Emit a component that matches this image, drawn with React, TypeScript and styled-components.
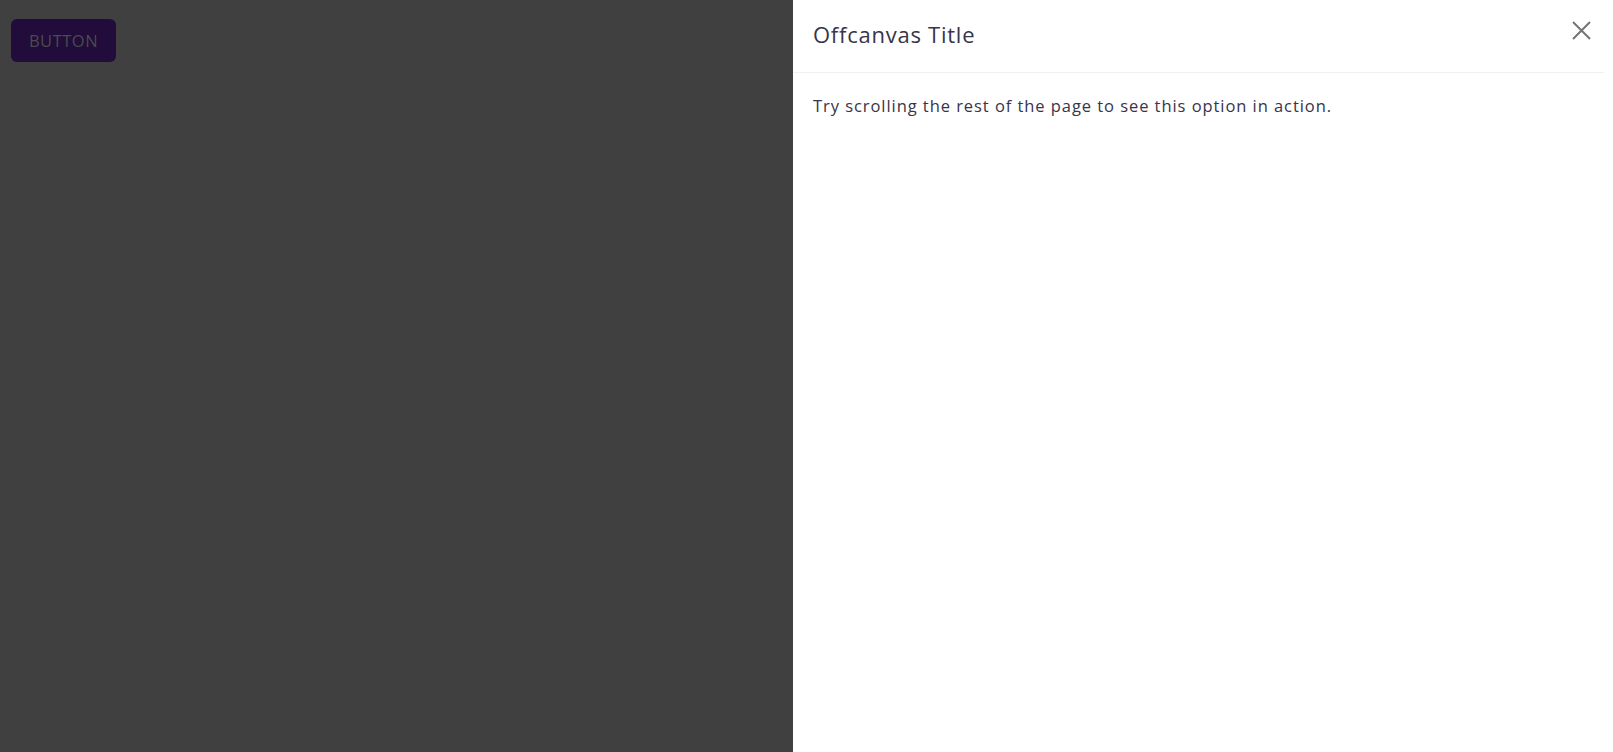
import styled, { createGlobalStyle } from "styled-components";

const GlobalStyle = createGlobalStyle`
html, body {
    margin: 0;
    padding: 0;
    height: 100%;
}
body {
    font-family: "Open Sans", "Noto Sans", sans-serif;
    background: #404040;
    overflow: hidden;
}
`

const StyledPage = styled.div`
min-height: 100vh;
padding: 19px 11px;
box-sizing: border-box;
`

const StyledButton = styled.button`
width: 105px;
height: 43px;
border: none;
border-radius: 6px;
background: #210c3b;
color: #4b4b4b;
font-family: inherit;
font-size: 16.5px;
letter-spacing: 0.5px;
text-transform: uppercase;
cursor: pointer;
`

const StyledOffcanvas = styled.aside`
position: fixed;
top: 0;
right: 0;
width: 820px;
height: 100vh;
background: #fff;
display: flex;
flex-direction: column;
color: #383449;
`

const StyledHeader = styled.header`
height: 73px;
margin-right: 9px;
padding: 0 11px 0 20px;
display: flex;
align-items: center;
justify-content: space-between;
border-bottom: 1px solid #f1f0f6;
box-sizing: border-box;
`

const StyledTitle = styled.h5`
margin: 0 0 4px;
font-size: 22px;
font-weight: 400;
letter-spacing: 0.75px;
`

const StyledClose = styled.button`
width: 24px;
height: 24px;
padding: 0;
margin-bottom: 12px;
border: none;
background: transparent;
color: #747474;
display: flex;
align-items: center;
justify-content: center;
cursor: pointer;
`

const StyledBody = styled.div`
padding: 21px 20px;
font-size: 16.5px;
line-height: 24px;
letter-spacing: 0.94px;
`

const App = () => {
    return (
        <>
            <GlobalStyle/>
            <StyledPage>
                <StyledButton>Button</StyledButton>
            </StyledPage>
            <StyledOffcanvas>
                <StyledHeader>
                    <StyledTitle>Offcanvas Title</StyledTitle>
                    <StyledClose aria-label="Close">
                        <svg width="19" height="19" viewBox="0 0 19 19">
                            <path d="M1 1 L18 18 M18 1 L1 18" stroke="currentColor" strokeWidth="2" fill="none"/>
                        </svg>
                    </StyledClose>
                </StyledHeader>
                <StyledBody>
                    Try scrolling the rest of the page to see this option in action.
                </StyledBody>
            </StyledOffcanvas>
        </>
    );
}

export default App;
